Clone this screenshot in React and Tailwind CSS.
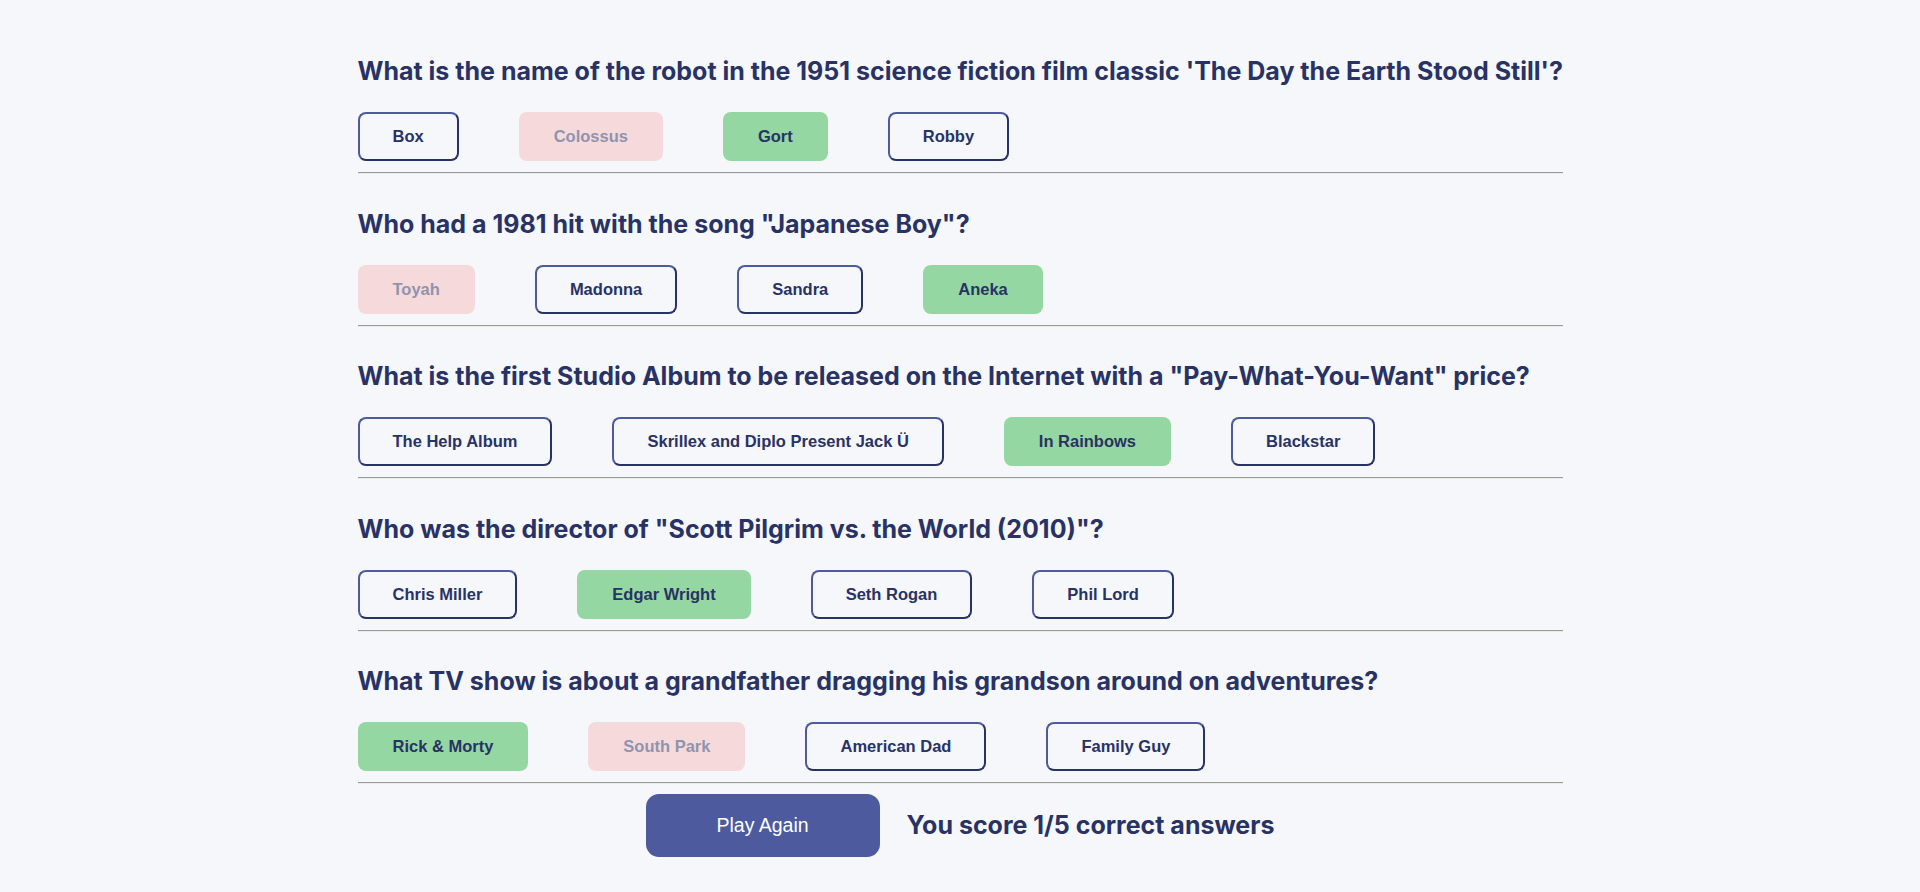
import React from 'react'

const QUESTIONS = [
  {
    q: "What is the name of the robot in the 1951 science fiction film classic 'The Day the Earth Stood Still'?",
    answers: [
      { text: 'Box' },
      { text: 'Colossus', state: 'wrong' },
      { text: 'Gort', state: 'correct' },
      { text: 'Robby' },
    ],
  },
  {
    q: 'Who had a 1981 hit with the song "Japanese Boy"?',
    answers: [
      { text: 'Toyah', state: 'wrong' },
      { text: 'Madonna' },
      { text: 'Sandra' },
      { text: 'Aneka', state: 'correct' },
    ],
  },
  {
    q: 'What is the first Studio Album to be released on the Internet with a "Pay-What-You-Want" price?',
    answers: [
      { text: 'The Help Album' },
      { text: 'Skrillex and Diplo Present Jack Ü' },
      { text: 'In Rainbows', state: 'correct' },
      { text: 'Blackstar' },
    ],
  },
  {
    q: 'Who was the director of "Scott Pilgrim vs. the World (2010)"?',
    answers: [
      { text: 'Chris Miller' },
      { text: 'Edgar Wright', state: 'correct' },
      { text: 'Seth Rogan' },
      { text: 'Phil Lord' },
    ],
  },
  {
    q: 'What TV show is about a grandfather dragging his grandson around on adventures?',
    answers: [
      { text: 'Rick & Morty', state: 'correct' },
      { text: 'South Park', state: 'wrong' },
      { text: 'American Dad' },
      { text: 'Family Guy' },
    ],
  },
]

function AnswerButton({ text, state }) {
  let look = 'border-t-[#4D5B9E] border-l-[#4D5B9E] border-b-[#293264] border-r-[#293264] bg-transparent'
  if (state === 'correct') look = 'border-transparent bg-[#94D7A2]'
  if (state === 'wrong') look = 'border-transparent bg-[#F8BCBC] opacity-50'

  return (
    <button
      className={`h-[49px] px-[33px] border-2 rounded-[8px] text-[16.5px] font-bold text-[#293264] leading-none whitespace-nowrap font-['Liberation_Sans',Arial,sans-serif] ${look}`}
    >
      {text}
    </button>
  )
}

export default function App() {
  return (
    <div className="min-h-screen bg-[#F5F7FB] font-['Inter',sans-serif]">
      <div className="w-[1205px] mx-auto pt-[57px]">
        {QUESTIONS.map((item, i) => (
          <div key={i} className={i > 0 ? 'mt-[35.5px]' : ''}>
            <h2 className="text-[25px] leading-[29px] font-bold text-[#293264] whitespace-nowrap">
              {item.q}
            </h2>
            <div className="mt-[26px] flex gap-[60px]">
              {item.answers.map((a) => (
                <AnswerButton key={a.text} {...a} />
              ))}
            </div>
            <div className="mt-[11px] h-0 border-t border-b border-t-[#9a9a9a] border-b-[#eaeaea]" />
          </div>
        ))}

        {/* Footer */}
        <div className="mt-[10px] flex items-center justify-center gap-[27px]">
          <button className="w-[234px] h-[63px] rounded-[13px] bg-[#4D5B9E] text-white text-[19.5px] font-['Liberation_Sans',Arial,sans-serif]">
            Play Again
          </button>
          <p className="text-[25px] font-bold text-[#293264]">You score 1/5 correct answers</p>
        </div>
      </div>
    </div>
  )
}
